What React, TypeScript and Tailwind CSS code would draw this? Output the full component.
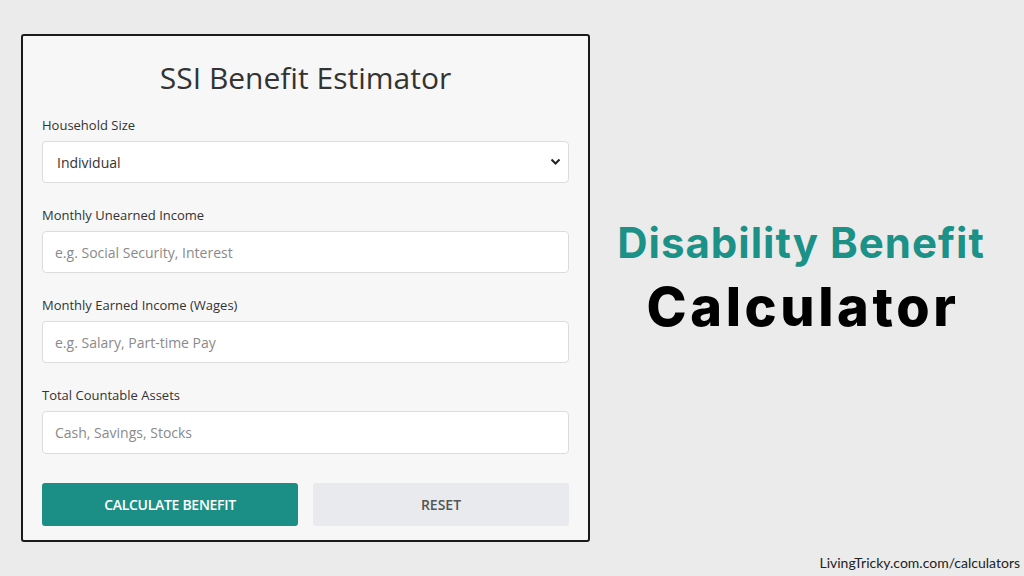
import React from "react";

const Field = ({ label, placeholder }: { label: string; placeholder: string }) => (
  <div className="mb-[22px]">
    <label className="block text-[13px] leading-[20px] text-[#333] mb-[6px]">{label}</label>
    <input
      placeholder={placeholder}
      className="w-full h-[42px] bg-white border border-[#dcdcdc] rounded-[4px] px-[12px] text-[14px] text-[#333] placeholder:text-[#8a8a8a] outline-none"
    />
  </div>
);

const App = () => {
  return (
    <div className="w-[1024px] h-[576px] bg-[#ebebeb] pt-[34px] pl-[21px] overflow-hidden" style={{ fontFamily: "'Open Sans', 'Noto Sans', sans-serif" }}>
      <div className="flex">
        <div className="w-[569px] h-[508px] bg-[#f7f7f7] border-2 border-[#1a1a1a] rounded-[3px] px-[19px] pt-[20px]">
          <h1 className="text-center text-[30px] leading-[44px] text-[#333] mb-[15px]">SSI Benefit Estimator</h1>
          <div className="mb-[22px]">
            <label className="block text-[13px] leading-[20px] text-[#333] mb-[6px]">Household Size</label>
            <div className="relative">
              <select className="w-full h-[42px] bg-white border border-[#dcdcdc] rounded-[4px] px-[14px] text-[14px] text-[#333] appearance-none outline-none">
                <option>Individual</option>
                <option>Couple</option>
              </select>
              <svg className="absolute right-[8px] top-[17px]" width="11" height="8" viewBox="0 0 11 8" fill="none">
                <path d="M1.5 1.5 L5.5 5.5 L9.5 1.5" stroke="#222" strokeWidth="2" />
              </svg>
            </div>
          </div>
          <Field label="Monthly Unearned Income" placeholder="e.g. Social Security, Interest" />
          <Field label="Monthly Earned Income (Wages)" placeholder="e.g. Salary, Part-time Pay" />
          <div>
            <label className="block text-[13px] leading-[20px] text-[#333] mb-[6px]">Total Countable Assets</label>
            <input
              placeholder="Cash, Savings, Stocks"
              className="w-full h-[43px] bg-white border border-[#dcdcdc] rounded-[4px] px-[12px] text-[14px] text-[#333] placeholder:text-[#8a8a8a] outline-none"
            />
          </div>
          <div className="grid grid-cols-2 gap-[15px] mt-[29px]">
            <button className="h-[43px] bg-[#1b8f85] rounded-[3px] text-white text-[14px] font-semibold tracking-[-0.3px]">CALCULATE BENEFIT</button>
            <button className="h-[43px] bg-[#e8eaed] rounded-[3px] text-[#555] text-[14px] font-semibold">RESET</button>
          </div>
        </div>
        <div className="flex-1 flex flex-col items-center pt-[182px] pr-[12px]" style={{ fontFamily: "Inter, sans-serif" }}>
          <div className="text-[42px] leading-[54px] font-bold text-[#1b9187] tracking-[1px]">Disability Benefit</div>
          <div className="text-[54px] leading-[62px] font-extrabold text-black mt-[6px] tracking-[3.6px] pl-[4px]">Calculator</div>
        </div>
      </div>
      <div className="flex justify-end pr-[4px] mt-[12px]">
        <span className="text-[14px] leading-[18px] text-[#222]" style={{ fontFamily: "Lato, sans-serif" }}>LivingTricky.com.com/calculators</span>
      </div>
    </div>
  );
};

export default App;
